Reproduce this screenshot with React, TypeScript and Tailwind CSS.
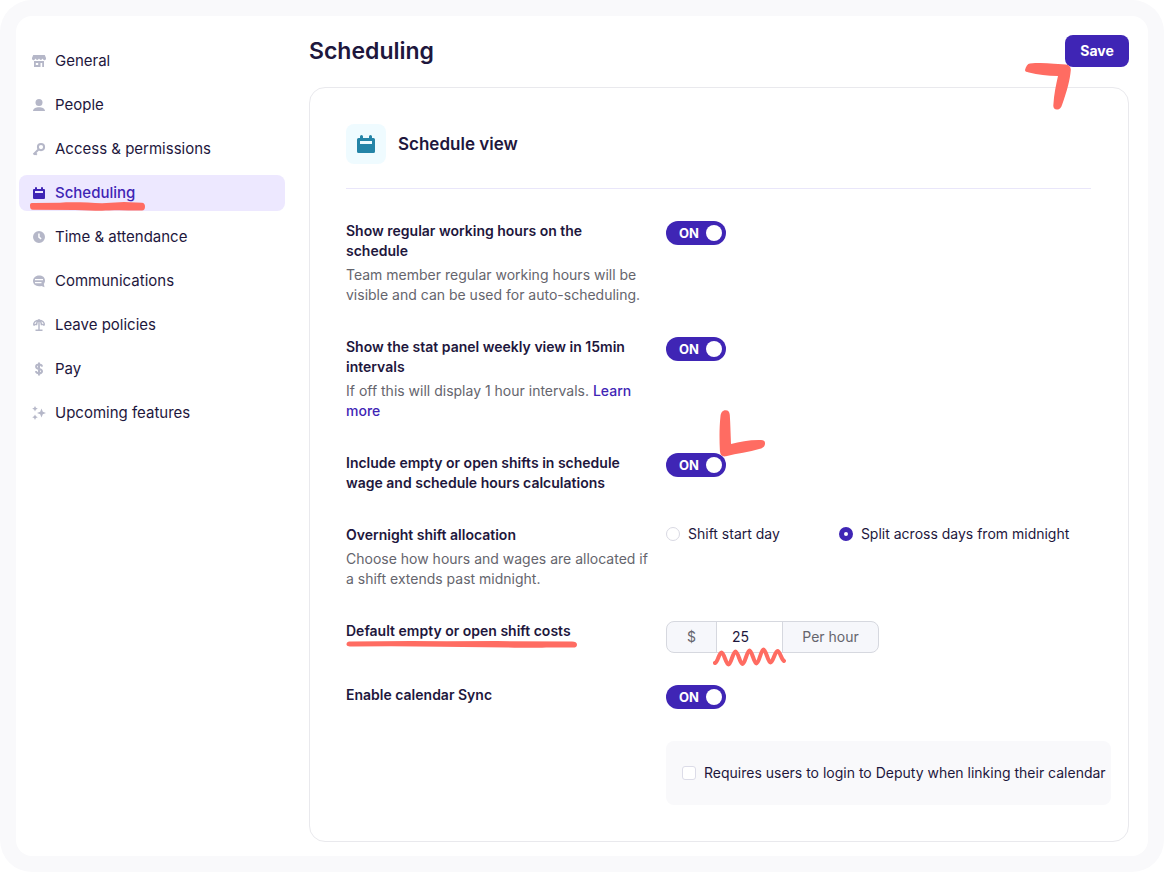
import { useState } from 'react';
import type { ReactNode } from 'react';

const CalendarIcon = ({ className }: { className: string }) => (
  <svg viewBox="0 0 18 18" fill="currentColor" className={className} aria-hidden="true">
    <path
      fillRule="evenodd"
      d="M3 1.5a1.5 1.5 0 0 1 3 0V3h6V1.5a1.5 1.5 0 0 1 3 0V3h1.500A1.500 1.500 0 0 1 18 4.500V16.500a1.500 1.500 0 0 1-1.500 1.500h-15A1.500 1.500 0 0 1 0 16.500V4.500A1.500 1.500 0 0 1 1.500 3H3zM3 6v3h12V6z"
    />
  </svg>
);

const navItems: { label: string; icon: ReactNode }[] = [
  {
    label: 'General',
    icon: (
      <path
        fillRule="evenodd"
        d="M1.200 1h11.600L14 4v1a1.600 1.600 0 0 1-2.800.6L10.500 4.500l-.7 1.100a1.700 1.700 0 0 1-2 0L7 4.500l-.8 1.100a1.700 1.700 0 0 1-2 0L3.500 4.500l-.7 1.100A1.600 1.600 0 0 1 0 5V4zM2 7h10v6h-1.800V9H8.500v4H2zM3.800 9v2h2.400V9z"
      />
    ),
  },
  {
    label: 'People',
    icon: (
      <>
        <circle cx="7" cy="4.400" r="3.500" />
        <path d="M1 13c0-2.400 2.700-3.800 6-3.800s6 1.400 6 3.800z" />
      </>
    ),
  },
  {
    label: 'Access & permissions',
    icon: (
      <path
        d="M6.700 7.300 1.500 12.500M3 11l1.800 1.700M9 8.200a3.100 3.100 0 1 0 0-6.200 3.100 3.100 0 0 0 0 6.200z"
        fill="none"
        stroke="currentColor"
        strokeWidth="2"
      />
    ),
  },
  { label: 'Scheduling', icon: null },
  {
    label: 'Time & attendance',
    icon: (
      <path
        fillRule="evenodd"
        d="M7 1a6 6 0 1 1 0 12A6 6 0 0 1 7 1zM6.200 3.500v4l2.500 1.900.9-1.200-1.900-1.400V3.500z"
      />
    ),
  },
  {
    label: 'Communications',
    icon: (
      <path
        fillRule="evenodd"
        d="M7 1.500c3.500 0 6 1.900 6 5 0 1.300-.4 2.500-1.200 3.300l.7 3.400-3-1.300c-.8.200-1.600.300-2.500.3-3.500 0-6-2.200-6-5.200s2.500-5.500 6-5.500zM3 5v1.200h8V5zM3 8v1.200h6.500V8z"
      />
    ),
  },
  {
    label: 'Leave policies',
    icon: (
      <path
        d="M7 1v11.500M3.500 12.300h7M1.700 7.500C1.200 4.500 3.500 2.200 7 2.200s5.800 2.300 5.300 5.300M1.700 7.400 4.300 6M12.300 7.400 9.700 6M4.500 7.200C4.500 4.600 5.500 3 7 2.200c1.500.8 2.500 2.400 2.500 5"
        fill="none"
        stroke="currentColor"
        strokeWidth="1.400"
      />
    ),
  },
  {
    label: 'Pay',
    icon: (
      <path
        d="M7 .5v13M10 4.600C9.800 3.300 8.600 2.600 7 2.600c-1.700 0-2.900.8-2.900 2.100C4.100 7.900 10 6 10 9.300c0 1.300-1.300 2.100-3 2.100s-2.900-.8-3.100-2.200"
        fill="none"
        stroke="currentColor"
        strokeWidth="2"
      />
    ),
  },
  {
    label: 'Upcoming features',
    icon: (
      <path d="M9.500 2.500 10.800 5.700 14 7l-3.200 1.300L9.500 11.500 8.200 8.300 5 7l3.200-1.300zM3 0l.9 1.800L5.800 2.700l-1.900.9L3 5.500l-.9-1.900L.2 2.700l1.900-.9zM3 8.500l.9 1.800 1.900.9-1.900.9L3 14l-.9-1.900-1.900-.9 1.900-.9z" />
    ),
  },
];

const NavItem = ({ label, icon }: { label: string; icon: ReactNode }) => {
  const active = label === 'Scheduling';

  return (
    <li className="relative">
      <a
        href="#"
        aria-current={active ? 'page' : undefined}
        className={
          active
            ? 'flex h-9 items-center gap-2 rounded-lg bg-[#ede8ff] px-3 font-medium text-[#3f25b5]'
            : 'flex h-9 items-center gap-2 rounded-lg px-3 text-[#1e173d]'
        }
      >
        <span className="flex w-4 shrink-0 justify-center">
          {active ? (
            <CalendarIcon className="size-3" />
          ) : (
            <svg viewBox="0 0 14 14" fill="currentColor" className="size-3.5 text-[#b5b7c8]" aria-hidden="true">
              {icon}
            </svg>
          )}
        </span>
        {label}
      </a>
      {active && (
        <svg
          viewBox="0 0 116 10"
          className="pointer-events-none absolute top-[26px] left-[11px] h-2.5 w-[116px] text-[#ff6c62]"
          fill="currentColor"
          aria-hidden="true"
        >
          <path d="M0 4.500C0 2 1.500 2 4 2l26-.3C45 .8 60 2 72 2.200L94 1l18 .8c2 .2 3 1.500 3 4 0 2.500-1 3.600-3 3.600-10 .4-21-.8-33 .1-12 .5-22-.5-34-.6L3 8.700C.8 8.700 0 7.500 0 4.500z" />
        </svg>
      )}
    </li>
  );
};

const Toggle = ({ labelledBy }: { labelledBy: string }) => {
  const [on, setOn] = useState(true);

  return (
    <button
      type="button"
      role="switch"
      aria-checked={on}
      aria-labelledby={labelledBy}
      onClick={() => setOn(!on)}
      className={
        on
          ? 'flex h-6 w-[60px] items-center justify-between rounded-full bg-[#3f25b5] pr-1 pl-[13px] text-[13px] font-bold text-white'
          : 'flex h-6 w-[60px] flex-row-reverse items-center justify-between rounded-full bg-[#b5b7c8] pr-2.5 pl-1 text-[13px] font-bold text-white'
      }
    >
      {on ? 'ON' : 'OFF'}
      <span className="size-4 rounded-full bg-white" />
    </button>
  );
};

type SettingProps = {
  id: string;
  title: string;
  description?: ReactNode;
  mark?: ReactNode;
  children: ReactNode;
};

const Setting = ({ id, title, description, mark, children }: SettingProps) => (
  <div className="flex gap-6">
    <div className="relative w-[296px] shrink-0">
      <h3 id={id} className="font-semibold">
        {title}
      </h3>
      {description && <p className="mt-1 -mr-2 text-[#65656d]">{description}</p>}
      {mark}
    </div>
    <div className="min-w-0 flex-1">{children}</div>
  </div>
);

const radioClass =
  'size-3.5 appearance-none rounded-full border border-[#d9d9e3] bg-white checked:border-[5px] checked:border-[#3f25b5]';

const App = () => (
  <div className="min-h-screen rounded-[32px] bg-[#f9f9fb] p-4 font-['Inter',sans-serif] text-sm text-[#1e173d]">
    <div className="flex gap-6 rounded-2xl bg-white pr-[19px] pb-3.5 pl-[3px]">
      <nav className="w-[266px] shrink-0 pt-[27px]" aria-label="Settings">
        <ul className="flex flex-col gap-2 text-[15px] leading-6">
          {navItems.map((item) => (
            <NavItem key={item.label} {...item} />
          ))}
        </ul>
      </nav>

      <main className="min-w-0 flex-1">
        <header className="flex items-center justify-between pt-[19px] pb-5">
          <h1 className="text-[23px] leading-8 font-semibold">Scheduling</h1>
          <div className="relative">
            <button type="button" className="h-8 w-16 rounded-lg bg-[#3f25b5] font-bold text-white">
              Save
            </button>
            <svg
              viewBox="0 0 46 48"
              className="pointer-events-none absolute top-7 -left-10 h-12 w-[46px] text-[#ff6c62]"
              fill="currentColor"
              aria-hidden="true"
            >
              <path d="M0 7C1 3.500 2.500.8 5 .6 13-.2 21 .1 29 .7L41 1.500C44 2 46 4 45.800 7 45 17 42 28 37 42c-1 3-2.500 4.800-5 4.600-2.800-.2-4-2-3.600-5C29 31 31 22 33 13 22 13 13 11.500 4 9.500 1.500 9 0 8.500 0 7z" />
            </svg>
          </div>
        </header>

        <section className="rounded-2xl border border-[#e9e9ed] py-9 pr-[17px] pl-9">
          <div className="mr-5 flex items-center gap-3 border-b border-[#e9e6fa] pb-6">
            <span className="flex size-10 items-center justify-center rounded-lg bg-[#effbff] text-[#2484a7]">
              <CalendarIcon className="size-[18px]" />
            </span>
            <h2 className="text-[17px] leading-6 font-semibold">Schedule view</h2>
          </div>

          <div className="mt-8 flex flex-col gap-8">
            <Setting
              id="regular-hours"
              title="Show regular working hours on the schedule"
              description="Team member regular working hours will be visible and can be used for auto-scheduling."
            >
              <Toggle labelledBy="regular-hours" />
            </Setting>

            <Setting
              id="stat-panel"
              title="Show the stat panel weekly view in 15min intervals"
              description={
                <>
                  If off this will display 1 hour intervals.{' '}
                  <a href="#" className="font-medium text-[#3f25b5]">
                    Learn more
                  </a>
                </>
              }
            >
              <Toggle labelledBy="stat-panel" />
            </Setting>

            <Setting
              id="open-shifts"
              title="Include empty or open shifts in schedule wage and schedule hours calculations"
            >
              <div className="relative">
                <Toggle labelledBy="open-shifts" />
                <svg
                  viewBox="0 0 47 47"
                  className="pointer-events-none absolute -top-[43px] left-[53px] size-[47px] text-[#ff6c62]"
                  fill="currentColor"
                  aria-hidden="true"
                >
                  <path d="M6.500.2C9.500.2 10.500 2 10.800 5c.6 9 .8 19 1.200 29 9-2.500 19-4.300 30-4 3 .1 4.300 1.500 4 4-.3 2.500-2 4-5 4.800C30 42 18 43.500 7 46.300 3 47 1.200 45 .9 41 .3 28 .3 17 1.500 6 1.900 2.500 3.500.2 6.500.2z" />
                </svg>
              </div>
            </Setting>

            <Setting
              id="overnight"
              title="Overnight shift allocation"
              description="Choose how hours and wages are allocated if a shift extends past midnight."
            >
              <div role="radiogroup" aria-labelledby="overnight" className="flex gap-[59px]">
                <label className="flex h-[18px] items-center gap-2">
                  <input type="radio" name="overnight" className={radioClass} />
                  Shift start day
                </label>
                <label className="flex h-[18px] items-center gap-2">
                  <input type="radio" name="overnight" defaultChecked className={radioClass} />
                  Split across days from midnight
                </label>
              </div>
            </Setting>

            <Setting
              id="shift-costs"
              title="Default empty or open shift costs"
              mark={
                <svg
                  viewBox="0 0 231 8"
                  className="pointer-events-none absolute top-[19px] left-0 h-2 w-[231px] text-[#ff6c62]"
                  fill="currentColor"
                  aria-hidden="true"
                >
                  <path d="M.5 4C.8 2 2 1.500 5 1.500l60-.6 36 .4 50-.2 75 .5c3 0 5 1.200 5 3.200s-1.500 2.800-4 2.800c-28-.2-40 .6-66-.2L95 6.800l-50-.5-38 .3C2 6.400.500 6 .5 4z" />
                </svg>
              }
            >
              <div className="relative flex h-8 w-[213px] rounded-lg border border-[#d6d8df] bg-[#f6f7fb] text-[#65656d]">
                <span className="flex w-[49px] items-center justify-center">$</span>
                <input
                  type="text"
                  inputMode="numeric"
                  defaultValue="25"
                  aria-labelledby="shift-costs"
                  className="w-[67px] border-x border-[#d6d8df] bg-white px-[15px] text-[#1e173d]"
                />
                <span className="flex flex-1 items-center justify-center">Per hour</span>
                <svg
                  viewBox="0 0 74 21"
                  className="pointer-events-none absolute top-[25px] left-[46px] h-[21px] w-[74px] text-[#ff6c62]"
                  fill="none"
                  stroke="currentColor"
                  strokeWidth="4"
                  strokeLinecap="round"
                  strokeLinejoin="round"
                  aria-hidden="true"
                >
                  <path d="M2 16C5 15 6 5.500 8.500 5.500S13 17.500 15.500 17.500 20 4.500 22.500 4.500 27 17 29.500 17 34 3.500 36.500 3.500 41 16.500 43.500 16.500 48 2.500 50.500 2.500 55 15.500 57.500 15.500 62 4 64.500 4 68 12 71 14" />
                </svg>
              </div>
            </Setting>

            <Setting id="calendar-sync" title="Enable calendar Sync">
              <Toggle labelledBy="calendar-sync" />
              <label className="mt-8 flex h-16 items-center gap-2 rounded-lg bg-[#f9f9fb] px-4 whitespace-nowrap">
                <input
                  type="checkbox"
                  className="size-3.5 shrink-0 appearance-none rounded-[3px] border border-[#dcdce8] bg-white checked:border-[#3f25b5] checked:bg-[#3f25b5]"
                />
                Requires users to login to Deputy when linking their calendar
              </label>
            </Setting>
          </div>
        </section>
      </main>
    </div>
  </div>
);

export default App;
